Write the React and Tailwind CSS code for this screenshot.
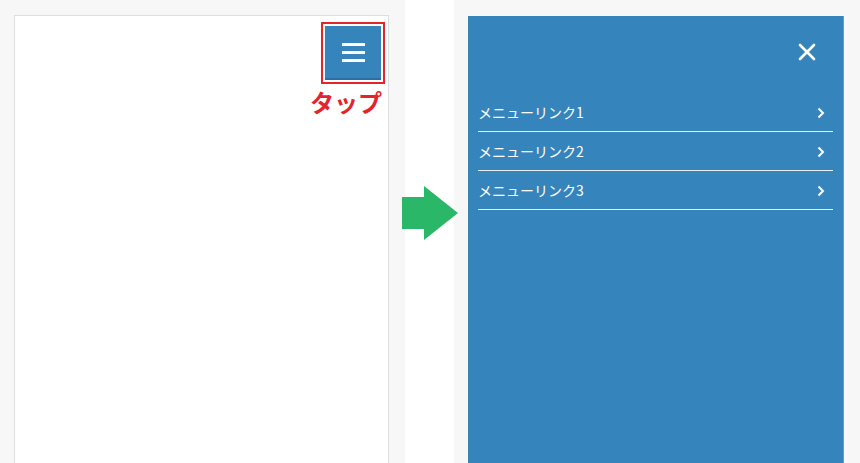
export default function App() {
  const links = ['メニューリンク1', 'メニューリンク2', 'メニューリンク3']

  return (
    <div
      className="w-[860px] h-[463px] flex bg-white overflow-hidden"
      style={{ fontFamily: '"Noto Sans CJK JP", "Noto Sans", sans-serif' }}
    >
      {/* 左：閉じた状態 */}
      <div className="w-[405px] shrink-0 bg-[#f7f7f7] pl-[14px] pr-[16px] pt-[15px]">
        <div className="h-[460px] bg-white border border-b-0 border-[#dedede] flex flex-col items-end pt-[6px] pr-[3px]">
          <div className="border-2 border-[#e5232a] p-[2px]">
            <div className="w-[56px] h-[54px] bg-[#3584bc] border-b-2 border-[#2a6ea3] flex flex-col items-center justify-center gap-[5px]">
              <span className="block w-[23px] h-[3px] bg-white" />
              <span className="block w-[23px] h-[3px] bg-white" />
              <span className="block w-[23px] h-[3px] bg-white" />
            </div>
          </div>
          <p className="mt-[2px] mr-[3px] text-[24px] leading-[32px] font-bold text-[#e5232a]">
            タップ
          </p>
        </div>
      </div>

      {/* 矢印 */}
      <div className="w-[49px] shrink-0 flex flex-col relative z-10">
        <svg className="ml-[-3px] mt-[186px] overflow-visible" width="56" height="54" viewBox="0 0 56 54">
          <polygon points="0,11 22,11 22,0 56,27 22,54 22,43 0,43" fill="#2bb768" />
        </svg>
      </div>

      {/* 右：開いた状態 */}
      <div className="flex-1 bg-[#f7f7f7] pl-[14px] pr-[16px] pt-[16px]">
        <div className="h-full bg-[#3584bc] border-r border-[#5d9fce] px-[10px]">
          <div className="h-[77px] flex items-start justify-end pt-[27px] pr-[17px]">
            <svg width="18" height="18" viewBox="0 0 18 18" fill="none" stroke="white" strokeWidth="2.6" strokeLinecap="round">
              <path d="M2 2L16 16M16 2L2 16" />
            </svg>
          </div>
          <ul>
            {links.map(l => (
              <li key={l} className="h-[39px] flex items-center justify-between border-b border-[#e8f1f8] text-white text-[14px]">
                <span>{l}</span>
                <svg className="mr-[8px] mt-[2px]" width="8" height="12" viewBox="0 0 8 12" fill="none" stroke="white" strokeWidth="2">
                  <path d="M1.5 1.5L6 6L1.5 10.5" />
                </svg>
              </li>
            ))}
          </ul>
        </div>
      </div>
    </div>
  )
}
